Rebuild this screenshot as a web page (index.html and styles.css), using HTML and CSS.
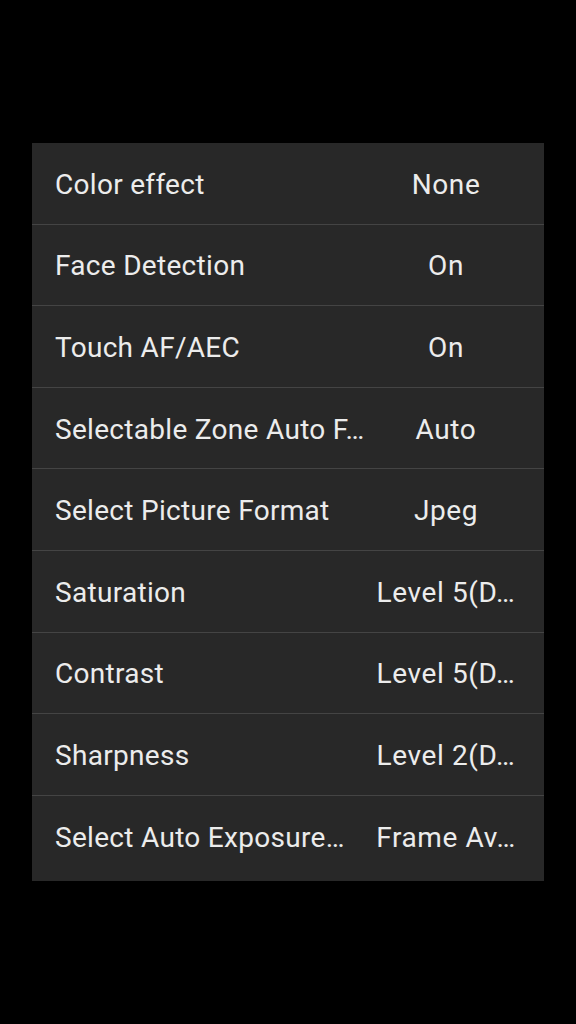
FILE: index.html
```html
<!DOCTYPE html>
<html lang="en">
<head>
  <meta charset="UTF-8">
  <title>Camera settings</title>
  <meta name="viewport" content="width=device-width, initial-scale=1.0">
  <link rel="stylesheet" href="styles.css">
</head>
<body>
  <ul class="settings">
    <li class="row"><span class="label">Color effect</span><span class="value">None</span></li>
    <li class="row"><span class="label">Face Detection</span><span class="value">On</span></li>
    <li class="row"><span class="label">Touch AF/AEC</span><span class="value">On</span></li>
    <li class="row"><span class="label">Selectable Zone Auto F…</span><span class="value">Auto</span></li>
    <li class="row"><span class="label">Select Picture Format</span><span class="value">Jpeg</span></li>
    <li class="row"><span class="label">Saturation</span><span class="value">Level 5(D…</span></li>
    <li class="row"><span class="label">Contrast</span><span class="value">Level 5(D…</span></li>
    <li class="row"><span class="label">Sharpness</span><span class="value">Level 2(D…</span></li>
    <li class="row"><span class="label">Select Auto Exposure…</span><span class="value">Frame Av…</span></li>
  </ul>
</body>
</html>
```

FILE: styles.css
```css
body {
  margin: 0;
  background: #000;
  font-family: Roboto, "Noto Sans", sans-serif;
  height: 1024px;
}

.settings {
  list-style: none;
  margin: 0;
  padding: 0 0 5px;
  position: relative;
  top: 143px;
  margin-left: 32px;
  width: 512px;
  background: #282828;
}

.row {
  display: flex;
  align-items: center;
  height: 78.6px;
  padding: 2px 22px 0 23px;
  border-top: 1px solid #444;
  color: #ececec;
  font-size: 28px;
  letter-spacing: 0.3px;
}

.row:first-child {
  border-top: none;
}

.label {
  flex: 1;
  white-space: nowrap;
}

.value {
  width: 152px;
  text-align: center;
  white-space: nowrap;
  letter-spacing: 0.6px;
}
```
